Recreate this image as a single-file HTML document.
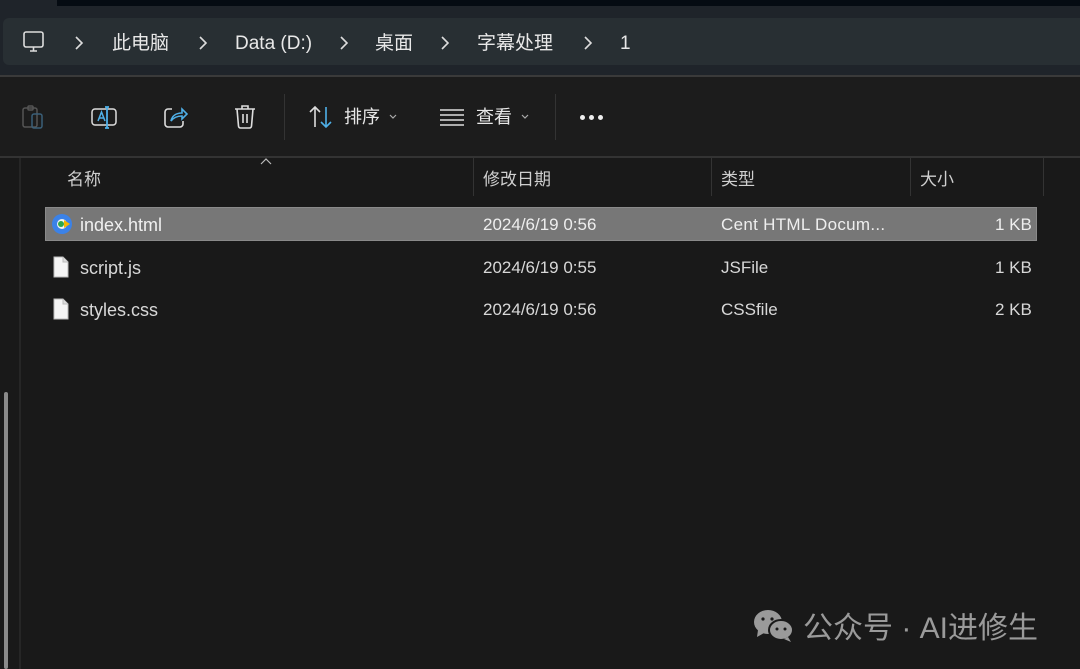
<!DOCTYPE html>
<html><head><meta charset="utf-8"><style>
*{margin:0;padding:0;box-sizing:border-box}
body{width:1080px;height:669px;overflow:hidden;background:#191919;font-family:"Liberation Sans","Noto Sans CJK SC",sans-serif;color:#e8e8e8;position:relative}
.a{position:absolute;line-height:1}
.t{font-size:19px;white-space:nowrap}
.c{font-family:"Noto Sans CJK SC",sans-serif}
.h{font-size:17px;color:#cfcfcf;white-space:nowrap;font-family:"Noto Sans CJK SC",sans-serif}
.r{font-size:17px;color:#d8d8d8;white-space:nowrap}
.ch{position:absolute;top:35px}
</style></head><body>
<div class="a" style="left:0;top:0;width:1080px;height:75px;background:#1f242a"></div>
<div class="a" style="left:57px;top:0;width:1023px;height:6px;background:#050b12"></div>
<div class="a" style="left:3px;top:18px;width:1077px;height:47px;background:#282f33;border-radius:6px 0 0 6px"></div>
<svg class="a" style="left:22px;top:30px" width="24" height="24" viewBox="0 0 24 24" fill="none" stroke="#ddd" stroke-width="1.6"><rect x="2" y="2" width="19" height="15" rx="2"/><path d="M8 21h7M11.5 17v4"/></svg>
<svg class="ch" style="left:74px" width="10" height="16" viewBox="0 0 10 16" fill="none" stroke="#ddd" stroke-width="1.6"><path d="M2 2l6 6-6 6"/></svg>
<div class="a t c" style="left:112px;top:32px">此电脑</div>
<svg class="ch" style="left:198px" width="10" height="16" viewBox="0 0 10 16" fill="none" stroke="#ddd" stroke-width="1.6"><path d="M2 2l6 6-6 6"/></svg>
<div class="a t" style="left:235px;top:34px">Data (D:)</div>
<svg class="ch" style="left:339px" width="10" height="16" viewBox="0 0 10 16" fill="none" stroke="#ddd" stroke-width="1.6"><path d="M2 2l6 6-6 6"/></svg>
<div class="a t c" style="left:375px;top:32px">桌面</div>
<svg class="ch" style="left:440px" width="10" height="16" viewBox="0 0 10 16" fill="none" stroke="#ddd" stroke-width="1.6"><path d="M2 2l6 6-6 6"/></svg>
<div class="a t c" style="left:477px;top:32px">字幕处理</div>
<svg class="ch" style="left:583px" width="10" height="16" viewBox="0 0 10 16" fill="none" stroke="#ddd" stroke-width="1.6"><path d="M2 2l6 6-6 6"/></svg>
<div class="a t" style="left:620px;top:34px">1</div>
<div class="a" style="left:0;top:75px;width:1080px;height:2px;background:#3a3a3a"></div>
<div class="a" style="left:0;top:77px;width:1080px;height:79px;background:#1c1c1c"></div>
<svg class="a" style="left:20px;top:104px" width="26" height="26" viewBox="0 0 26 26" fill="none" stroke-width="1.5"><rect x="3" y="4" width="14" height="19" rx="2" stroke="#555"/><rect x="8" y="2" width="5" height="4" rx="1" stroke="#555"/><rect x="12" y="10" width="10" height="14" rx="2" stroke="#3a5f78"/></svg>
<svg class="a" style="left:90px;top:104px" width="28" height="26" viewBox="0 0 28 26" fill="none" stroke-width="1.5"><rect x="2" y="5" width="24" height="16" rx="3" stroke="#ddd"/><path d="M8 17l3.5-9 3.5 9M9 14h5" stroke="#4fb0e8"/><path d="M17 3v21M15 3h4M15 24h4" stroke="#4fb0e8" stroke-width="1.8"/></svg>
<svg class="a" style="left:162px;top:104px" width="26" height="26" viewBox="0 0 26 26" fill="none" stroke-width="1.6"><path d="M10 5H6a3 3 0 0 0-3 3v12a3 3 0 0 0 3 3h12a3 3 0 0 0 3-3v-3" stroke="#ddd"/><path d="M9 17c1-5 5-8 11-8V5l5 5-5 5v-3c-4 0-8 1-11 5z" stroke="#4fb0e8"/></svg>
<svg class="a" style="left:233px;top:104px" width="24" height="26" viewBox="0 0 24 26" fill="none" stroke="#ddd" stroke-width="1.6"><path d="M2 5h20M9 5V2h6v3M4 5l1.5 17a2 2 0 0 0 2 2h9a2 2 0 0 0 2-2L20 5M10 10v9M14 10v9"/></svg>
<div class="a" style="left:284px;top:94px;width:1px;height:46px;background:#333"></div>
<svg class="a" style="left:307px;top:105px" width="28" height="24" viewBox="0 0 28 24" fill="none" stroke-width="1.6"><path d="M8 22V2M3 7l5-5 5 5" stroke="#ddd"/><path d="M19 2v20M14 17l5 5 5-5" stroke="#4fb0e8"/></svg>
<div class="a c" style="left:344px;top:107px;font-size:18px;color:#e8e8e8">排序</div>
<svg class="a" style="left:389px;top:114px" width="8" height="6" viewBox="0 0 8 6" fill="none" stroke="#aaa" stroke-width="1.2"><path d="M1 1l3 3 3-3"/></svg>
<svg class="a" style="left:439px;top:107px" width="26" height="20" viewBox="0 0 26 20" stroke="#ddd" stroke-width="1.6"><path d="M1 3h24M1 8h24M1 13h24M1 18h24"/></svg>
<div class="a c" style="left:476px;top:107px;font-size:18px;color:#e8e8e8">查看</div>
<svg class="a" style="left:521px;top:114px" width="8" height="6" viewBox="0 0 8 6" fill="none" stroke="#aaa" stroke-width="1.2"><path d="M1 1l3 3 3-3"/></svg>
<div class="a" style="left:555px;top:94px;width:1px;height:46px;background:#333"></div>
<div class="a" style="left:580px;top:115px;width:5px;height:5px;border-radius:50%;background:#eee;box-shadow:9px 0 #eee,18px 0 #eee"></div>
<div class="a" style="left:0;top:156px;width:1080px;height:2px;background:#333"></div>
<div class="a" style="left:19px;top:158px;width:2px;height:511px;background:#262626"></div>
<div class="a" style="left:4px;top:392px;width:4px;height:277px;background:#8a8a8a;border-radius:2px"></div>
<svg class="a" style="left:260px;top:158px" width="12" height="7" viewBox="0 0 12 7" fill="none" stroke="#bbb" stroke-width="1.2"><path d="M1 6l5-5 5 5"/></svg>
<div class="a h" style="left:67px;top:169px">名称</div>
<div class="a" style="left:473px;top:158px;width:1px;height:38px;background:#333"></div>
<div class="a h" style="left:483px;top:169px">修改日期</div>
<div class="a" style="left:711px;top:158px;width:1px;height:38px;background:#333"></div>
<div class="a h" style="left:721px;top:169px">类型</div>
<div class="a" style="left:910px;top:158px;width:1px;height:38px;background:#333"></div>
<div class="a h" style="left:920px;top:169px">大小</div>
<div class="a" style="left:1043px;top:158px;width:1px;height:38px;background:#333"></div>
<div class="a" style="left:45px;top:207px;width:992px;height:34px;background:#777;border:1px solid #8a8a8a"></div>
<svg class="a" style="left:51px;top:213px" width="22" height="22" viewBox="0 0 22 22"><circle cx="11" cy="11" r="10" fill="#3b82e8"/><circle cx="11" cy="11" r="5" fill="#f3f3f3"/><circle cx="10" cy="11" r="3" fill="#2ea84a"/><path d="M13 7l6 4-6 4z" fill="#f4b400"/></svg>
<div class="a r" style="left:80px;top:216px;font-size:18px;color:#f0f0f0">index.html</div>
<div class="a r" style="left:483px;top:216px;color:#eee">2024/6/19 0:56</div>
<div class="a r" style="left:721px;top:216px;color:#eee;letter-spacing:0.3px">Cent HTML Docum...</div>
<div class="a r" style="left:995px;top:216px;color:#eee">1 KB</div>
<svg class="a" style="left:53px;top:256px" width="16" height="22" viewBox="0 0 16 22"><path d="M1 1h9l5 5v15H1z" fill="#f5f5f5" stroke="#bbb"/><path d="M10 1v5h5" fill="#ddd" stroke="#bbb"/></svg>
<div class="a r" style="left:80px;top:259px;font-size:18px">script.js</div>
<div class="a r" style="left:483px;top:259px">2024/6/19 0:55</div>
<div class="a r" style="left:721px;top:259px">JSFile</div>
<div class="a r" style="left:995px;top:259px">1 KB</div>
<svg class="a" style="left:53px;top:298px" width="16" height="22" viewBox="0 0 16 22"><path d="M1 1h9l5 5v15H1z" fill="#f5f5f5" stroke="#bbb"/><path d="M10 1v5h5" fill="#ddd" stroke="#bbb"/></svg>
<div class="a r" style="left:80px;top:301px;font-size:18px">styles.css</div>
<div class="a r" style="left:483px;top:301px">2024/6/19 0:56</div>
<div class="a r" style="left:721px;top:301px">CSSfile</div>
<div class="a r" style="left:995px;top:301px">2 KB</div>
<svg class="a" style="left:752px;top:608px" width="44" height="36" viewBox="0 0 44 36"><ellipse cx="16" cy="14" rx="14" ry="12" fill="#9a9a9a"/><path d="M6 22l-1 7 7-4z" fill="#9a9a9a"/><ellipse cx="29" cy="22" rx="12" ry="10" fill="#9a9a9a" stroke="#191919" stroke-width="2"/><path d="M36 29l3 5-7-3z" fill="#9a9a9a"/><circle cx="11" cy="11" r="1.6" fill="#191919"/><circle cx="20" cy="11" r="1.6" fill="#191919"/><circle cx="25" cy="21" r="1.5" fill="#191919"/><circle cx="33" cy="21" r="1.5" fill="#191919"/></svg>
<div class="a" style="left:803px;top:610px;font-size:30px;color:#9a9a9a;white-space:nowrap"><span class="c">公众号</span><span style="font-family:'Liberation Sans'"> · AI</span><span class="c">进修生</span></div>
</body></html>
